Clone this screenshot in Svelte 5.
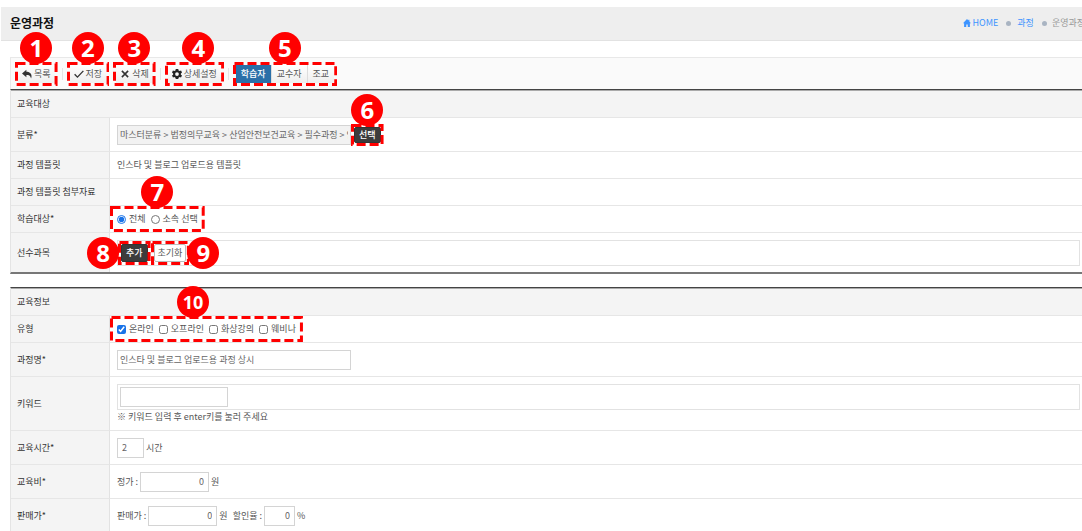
<script>
  let target = $state('all');
  let role = $state('학습자');
  let category = $state('마스터분류 > 법정의무교육 > 산업안전보건교육 > 필수과정 > 인스타');
  let courseName = $state('인스타 및 블로그 업로드용 과정 상시');
  let keyword = $state('');
  let hours = $state('2');
  let listPrice = $state('0');
  let salePrice = $state('0');
  let discount = $state('0');

  const roles = ['학습자', '교수자', '조교'];

  let types = $state([
    { name: '온라인', checked: true },
    { name: '오프라인', checked: false },
    { name: '화상강의', checked: false },
    { name: '웨비나', checked: false },
  ]);
</script>

<!-- dashed frame and numbered badge around a control -->
{#snippet callout(number, side, at = 50)}
  <svg class="frame" aria-hidden="true"><rect x="1.5" y="1.5" /></svg>
  <span class="badge {side}" class:small={number > 9} style="--at: {at}%">{number}</span>
{/snippet}

<div class="page">
  <header class="title-bar">
    <h1>운영과정</h1>
    <nav class="breadcrumb">
      <a href="/">
        <svg class="home" viewBox="0 0 16 16"><path d="M8 0 0 8.5h2.2V16h4.3v-5h3v5h4.3V8.5H16L12.8 5V1.5h-2v1.4z" /></svg>
        HOME
      </a>
      <a href="/course">과정</a>
      <span class="here">운영과정</span>
    </nav>
  </header>

  <main>
    <div class="toolbar">
      <div class="mark">
        <button class="tool" type="button">
          <svg viewBox="0 0 16 16"><path d="M7 1 0 7l7 6V9.500c4 0 6 .5 7.500 5.500C17 9 13 4.500 7 4.500z" fill="#333" /></svg>
          목록
        </button>
        {@render callout(1, 'above')}
      </div>
      <span class="sep"></span>
      <div class="mark">
        <button class="tool" type="button">
          <svg viewBox="0 0 16 16"><path d="M1 8.500 5.500 13 15 3" fill="none" stroke="#333" stroke-width="2.200" /></svg>
          저장
        </button>
        {@render callout(2, 'above')}
      </div>
      <div class="mark">
        <button class="tool" type="button">
          <svg viewBox="0 0 16 16"><path d="M3 3l10 10M13 3 3 13" fill="none" stroke="#333" stroke-width="2.500" /></svg>
          삭제
        </button>
        {@render callout(3, 'above')}
      </div>
      <span class="sep"></span>
      <div class="mark">
        <button class="tool" type="button">
          <svg viewBox="0 0 16 16">
            <path
              fill="#222"
              fill-rule="evenodd"
              d="M6 0h4l.5 2.300 1.700 1 2.300-.8 1.500 3.200L14.200 7v2l1.800 1.500-1.600 3.200-2.300-.8-1.600.9L10 16H6l-.5-2.200-1.600-.9-2.300.8L0 10.500 1.800 9V7L0 5.700l1.500-3.200 2.300.8 1.700-1zM8 5a3 3 0 1 0 0 6 3 3 0 0 0 0-6z"
            />
          </svg>
          상세설정
        </button>
        {@render callout(4, 'above', 57)}
      </div>
      <span class="sep"></span>
      <div class="mark roles">
        {#each roles as name}
          <button class="role" class:active={role === name} type="button" onclick={() => (role = name)}>{name}</button>
        {/each}
        {@render callout(5, 'above')}
      </div>
    </div>

    <table class="closed">
      <thead>
        <tr><th colspan="2">교육대상</th></tr>
      </thead>
      <tbody>
        <tr class="tall">
          <th><label for="category">분류*</label></th>
          <td>
            <div class="line">
              <input id="category" class="wide" type="text" readonly bind:value={category} />
              <div class="mark pick">
                <button class="dark" type="button">선택</button>
                {@render callout(6, 'above')}
              </div>
            </div>
          </td>
        </tr>
        <tr>
          <th>과정 템플릿</th>
          <td>인스타 및 블로그 업로드용 템플릿</td>
        </tr>
        <tr>
          <th>과정 템플릿 첨부자료</th>
          <td></td>
        </tr>
        <tr>
          <th>학습대상*</th>
          <td>
            <div class="mark choices">
              <label><input type="radio" name="target" value="all" bind:group={target} />전체</label>
              <label><input type="radio" name="target" value="dept" bind:group={target} />소속 선택</label>
              {@render callout(7, 'above')}
            </div>
          </td>
        </tr>
        <tr class="tall">
          <th>선수과목</th>
          <td>
            <div class="box subjects">
              <div class="mark">
                <button class="dark" type="button">추가</button>
                {@render callout(8, 'before')}
              </div>
              <div class="mark">
                <button class="light" type="button">초기화</button>
                {@render callout(9, 'after')}
              </div>
            </div>
          </td>
        </tr>
      </tbody>
    </table>

    <table>
      <thead>
        <tr><th colspan="2">교육정보</th></tr>
      </thead>
      <tbody>
        <tr>
          <th>유형</th>
          <td>
            <div class="mark choices">
              {#each types as type}
                <label><input type="checkbox" bind:checked={type.checked} />{type.name}</label>
              {/each}
              {@render callout(10, 'above', 43)}
            </div>
          </td>
        </tr>
        <tr class="tall">
          <th><label for="name">과정명*</label></th>
          <td><div class="line"><input id="name" class="wide" type="text" bind:value={courseName} /></div></td>
        </tr>
        <tr class="tall">
          <th><label for="keyword">키워드</label></th>
          <td>
            <div class="box keywords">
              <input id="keyword" type="text" bind:value={keyword} />
            </div>
            <p class="hint">※ 키워드 입력 후 enter키를 눌러 주세요</p>
          </td>
        </tr>
        <tr class="tall">
          <th><label for="hours">교육시간*</label></th>
          <td><div class="line"><input id="hours" class="hours" type="text" bind:value={hours} />시간</div></td>
        </tr>
        <tr class="tall">
          <th>교육비*</th>
          <td>
            <div class="line">
              <label for="list-price">정가 :</label>
              <input id="list-price" class="price" type="text" bind:value={listPrice} />원
            </div>
          </td>
        </tr>
        <tr class="tall">
          <th>판매가*</th>
          <td>
            <div class="line">
              <label for="sale-price">판매가 :</label>
              <input id="sale-price" class="price" type="text" bind:value={salePrice} />원
              <label class="next" for="discount">할인율 :</label>
              <input id="discount" class="rate" type="text" bind:value={discount} />%
            </div>
          </td>
        </tr>
      </tbody>
    </table>
  </main>
</div>

<style>
  :global(body) {
    margin: 0;
    background: #fff;
    overflow: hidden;
  }

  .page,
  .page * {
    box-sizing: border-box;
  }

  .page {
    padding-top: 7px;
    font-family: 'Noto Sans CJK KR', 'Noto Sans', sans-serif;
    font-size: 9px;
    line-height: 14px;
    color: #555;
    overflow: hidden;
  }

  .title-bar {
    display: flex;
    justify-content: space-between;
    align-items: center;
    margin-left: 1px;
    padding: 7px 0 8px 9px;
    background: #eee;
    border-bottom: 1px solid #e2e2e2;
  }

  h1 {
    margin: 0;
    font-size: 12px;
    line-height: 18px;
    font-weight: 700;
    color: #111;
  }

  .breadcrumb {
    display: flex;
    align-items: center;
    margin-right: -3px;
    white-space: nowrap;
  }

  .breadcrumb a {
    display: flex;
    align-items: center;
    gap: 1px;
    color: #3d94ff;
    text-decoration: none;
  }

  .breadcrumb .here {
    display: flex;
    align-items: center;
    color: #999;
  }

  .breadcrumb > * + *::before {
    content: '';
    width: 5px;
    height: 5px;
    margin: 0 5px 0 8px;
    border-radius: 50%;
    background: #a9b4c2;
  }

  .home {
    width: 8px;
    height: 8px;
    fill: #3d94ff;
  }

  main {
    margin: 16px 0 0 10px;
  }

  .toolbar {
    display: flex;
    align-items: center;
    gap: 4px;
    height: 32px;
    padding-left: 4px;
    border-top: 1px solid #e8e8e8;
    border-left: 1px solid #e8e8e8;
    background: #fafafa;
  }

  .sep {
    width: 1px;
    height: 12px;
    background: #e4e4e4;
  }

  .mark {
    position: relative;
    display: flex;
    flex: none;
    padding: 3px;
  }

  .frame {
    position: absolute;
    inset: 0;
    width: 100%;
    height: 100%;
    pointer-events: none;
  }

  .frame rect {
    width: calc(100% - 3px);
    height: calc(100% - 3px);
    fill: none;
    stroke: #f00;
    stroke-width: 3px;
    stroke-dasharray: 9 4;
  }

  .badge {
    position: absolute;
    z-index: 1;
    width: 32px;
    height: 32px;
    border-radius: 50%;
    background: #f00;
    color: #fff;
    font: 700 24px/32px 'Noto Sans', sans-serif;
    text-align: center;
    pointer-events: none;
  }

  .badge.small {
    font-size: 18px;
  }

  .above {
    left: var(--at);
    bottom: calc(100% - 2px);
    margin-left: -16px;
  }

  .before,
  .after {
    top: 50%;
    margin-top: -16px;
  }

  .before {
    right: calc(100% - 1px);
  }

  .after {
    left: calc(100% - 2px);
  }

  button {
    font: inherit;
    white-space: nowrap;
    cursor: pointer;
  }

  .tool {
    display: flex;
    align-items: center;
    gap: 2px;
    height: 18px;
    padding: 0 4px;
    border: 0;
    background: linear-gradient(#fff, #eee);
    color: #555;
  }

  .tool svg {
    width: 10px;
    height: 10px;
  }

  .role {
    height: 18px;
    padding: 0 5px;
    border: 0;
    background: linear-gradient(#fff, #eee);
    color: #555;
  }

  .role + .role {
    border-left: 1px solid #ddd;
  }

  .role.active {
    background: #2a6fa8;
    color: #fff;
    font-weight: 500;
  }

  table {
    width: 100%;
    border-spacing: 0;
    border-top: 1px solid #444;
    border-left: 1px solid #e4e4e4;
  }

  table + table {
    margin-top: 13px;
  }

  .closed {
    border-bottom: 2px solid #777;
  }

  .closed tbody tr:last-child > * {
    height: 39px;
    border-bottom: 0;
  }

  th,
  td {
    height: 27px;
    padding: 0 2px 0 7px;
    border-bottom: 1px solid #e6e6e6;
    text-align: left;
    vertical-align: middle;
  }

  th {
    width: 99px;
    padding-left: 6px;
    background: #f4f4f4;
    border-right: 1px solid #e2e2e2;
    color: #333;
    font-weight: 400;
    white-space: nowrap;
  }

  thead th {
    height: 28px;
    border-top: 1px solid #aaa;
    border-right: 0;
  }

  .tall > * {
    height: 34px;
  }

  .line {
    display: flex;
    align-items: center;
    gap: 2px;
  }

  .next {
    margin-left: 3px;
  }

  .pick {
    margin: 1px 0 0 -2px;
  }

  input[type='text'] {
    height: 20px;
    padding: 0 4px;
    border: 1px solid #d4d4d4;
    background: #fff;
    color: #666;
    font: inherit;
  }

  input[type='text']:read-only {
    background: #f2f2f2;
  }

  .line .wide {
    width: 234px;
    padding: 0 2px;
  }

  .line .hours {
    width: 27px;
  }

  .line .price {
    width: 69px;
    text-align: right;
  }

  .line .rate {
    width: 31px;
    text-align: right;
  }

  .choices {
    width: max-content;
    gap: 5px;
    margin-left: -7px;
    padding: 6px 7px;
  }

  .choices label {
    display: flex;
    align-items: center;
    gap: 3px;
  }

  .choices input {
    width: 9px;
    height: 9px;
    margin: 0;
    accent-color: #1a73e8;
  }

  .box {
    border: 1px solid #e2e2e2;
  }

  .subjects {
    display: flex;
    height: 26px;
    align-items: center;
  }

  .dark,
  .light {
    height: 18px;
    padding: 0 4px;
    border: 1px solid #333;
    border-radius: 2px;
    background: #3c3c3c;
    color: #fff;
    font-weight: 500;
  }

  .pick .dark {
    height: 16px;
    line-height: 14px;
  }

  .light {
    padding: 0 3px;
    border-color: #bbb;
    background: #fff;
    color: #555;
    font-weight: 400;
  }

  .keywords {
    display: flex;
    margin-top: 7px;
    padding: 2px;
  }

  .keywords input {
    width: 108px;
  }

  .hint {
    margin: 0 0 6px;
  }
</style>
